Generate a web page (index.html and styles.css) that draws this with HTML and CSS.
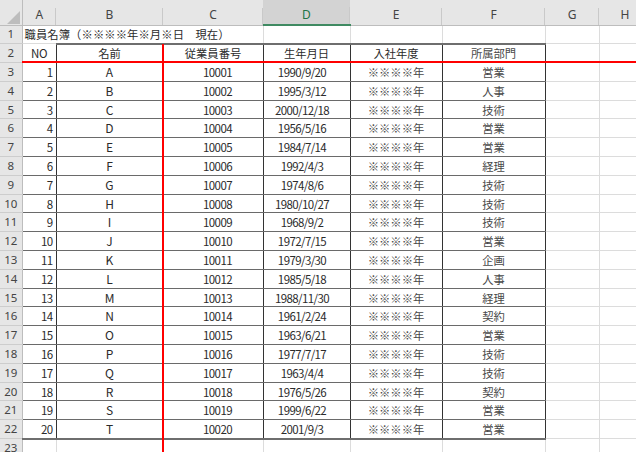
FILE: index.html
```html
<!DOCTYPE html>
<html lang="ja">
<head>
<meta charset="utf-8">
<title>職員名簿</title>
<link rel="stylesheet" href="styles.css">
</head>
<body>
<div class="sheet">
<table class="grid">
<colgroup><col class="w-rh"><col class="w-a"><col class="w-b"><col class="w-c"><col class="w-d"><col class="w-e"><col class="w-f"><col class="w-g"><col class="w-h"></colgroup>
<thead>
<tr class="colhead"><th class="corner"><svg class="tri" width="13" height="13" viewBox="0 0 13 13"><polygon points="13,0 13,13 0,13" fill="#bdbdbd"/></svg></th><th>A</th><th>B</th><th>C</th><th class="sel">D</th><th>E</th><th>F</th><th>G</th><th>H</th></tr>
</thead>
<tbody>
<tr class="r1"><th class="rh">1</th><td class="title" colspan="3">職員名簿（※※※※年※月※日　現在）</td><td></td><td></td><td></td><td></td><td></td></tr>
<tr class="hdr"><th class="rh">2</th><td class="lat">NO</td><td>名前</td><td>従業員番号</td><td>生年月日</td><td>入社年度</td><td>所属部門</td><td></td><td></td></tr>
<tr class="rec"><th class="rh">3</th><td>1</td><td>A</td><td>10001</td><td>1990/9/20</td><td>※※※※年</td><td>営業</td><td></td><td></td></tr>
<tr class="rec"><th class="rh">4</th><td>2</td><td>B</td><td>10002</td><td>1995/3/12</td><td>※※※※年</td><td>人事</td><td></td><td></td></tr>
<tr class="rec"><th class="rh">5</th><td>3</td><td>C</td><td>10003</td><td>2000/12/18</td><td>※※※※年</td><td>技術</td><td></td><td></td></tr>
<tr class="rec"><th class="rh">6</th><td>4</td><td>D</td><td>10004</td><td>1956/5/16</td><td>※※※※年</td><td>営業</td><td></td><td></td></tr>
<tr class="rec"><th class="rh">7</th><td>5</td><td>E</td><td>10005</td><td>1984/7/14</td><td>※※※※年</td><td>営業</td><td></td><td></td></tr>
<tr class="rec"><th class="rh">8</th><td>6</td><td>F</td><td>10006</td><td>1992/4/3</td><td>※※※※年</td><td>経理</td><td></td><td></td></tr>
<tr class="rec"><th class="rh">9</th><td>7</td><td>G</td><td>10007</td><td>1974/8/6</td><td>※※※※年</td><td>技術</td><td></td><td></td></tr>
<tr class="rec"><th class="rh">10</th><td>8</td><td>H</td><td>10008</td><td>1980/10/27</td><td>※※※※年</td><td>技術</td><td></td><td></td></tr>
<tr class="rec"><th class="rh">11</th><td>9</td><td>I</td><td>10009</td><td>1968/9/2</td><td>※※※※年</td><td>技術</td><td></td><td></td></tr>
<tr class="rec"><th class="rh">12</th><td>10</td><td>J</td><td>10010</td><td>1972/7/15</td><td>※※※※年</td><td>営業</td><td></td><td></td></tr>
<tr class="rec"><th class="rh">13</th><td>11</td><td>K</td><td>10011</td><td>1979/3/30</td><td>※※※※年</td><td>企画</td><td></td><td></td></tr>
<tr class="rec"><th class="rh">14</th><td>12</td><td>L</td><td>10012</td><td>1985/5/18</td><td>※※※※年</td><td>人事</td><td></td><td></td></tr>
<tr class="rec"><th class="rh">15</th><td>13</td><td>M</td><td>10013</td><td>1988/11/30</td><td>※※※※年</td><td>経理</td><td></td><td></td></tr>
<tr class="rec"><th class="rh">16</th><td>14</td><td>N</td><td>10014</td><td>1961/2/24</td><td>※※※※年</td><td>契約</td><td></td><td></td></tr>
<tr class="rec"><th class="rh">17</th><td>15</td><td>O</td><td>10015</td><td>1963/6/21</td><td>※※※※年</td><td>営業</td><td></td><td></td></tr>
<tr class="rec"><th class="rh">18</th><td>16</td><td>P</td><td>10016</td><td>1977/7/17</td><td>※※※※年</td><td>技術</td><td></td><td></td></tr>
<tr class="rec"><th class="rh">19</th><td>17</td><td>Q</td><td>10017</td><td>1963/4/4</td><td>※※※※年</td><td>技術</td><td></td><td></td></tr>
<tr class="rec"><th class="rh">20</th><td>18</td><td>R</td><td>10018</td><td>1976/5/26</td><td>※※※※年</td><td>契約</td><td></td><td></td></tr>
<tr class="rec"><th class="rh">21</th><td>19</td><td>S</td><td>10019</td><td>1999/6/22</td><td>※※※※年</td><td>営業</td><td></td><td></td></tr>
<tr class="rec last"><th class="rh">22</th><td>20</td><td>T</td><td>10020</td><td>2001/9/3</td><td>※※※※年</td><td>営業</td><td></td><td></td></tr>
<tr class="blank"><th class="rh">23</th><td></td><td></td><td></td><td></td><td></td><td></td><td></td><td></td></tr>
</tbody>
</table>
<div class="red-v"></div>
<div class="red-h"></div>
</div>
</body>
</html>
```
FILE: styles.css
```css
html, body {
  margin: 0;
  padding: 0;
  background: #fff;
}
body {
  overflow: hidden;
  font-family: "Noto Sans CJK JP", "Noto Sans", sans-serif;
  color: #2b2b2b;
}
.sheet {
  position: relative;
  width: 636px;
  height: 452px;
  overflow: hidden;
}
.grid {
  border-collapse: collapse;
  table-layout: fixed;
  width: 651px;
}
.w-rh { width: 22px; }
.w-a { width: 34px; }
.w-b { width: 107px; }
.w-c { width: 100px; }
.w-d { width: 87px; }
.w-e { width: 92px; }
.w-f { width: 103px; }
.w-g { width: 54px; }
.w-h { width: 52px; }

.grid th, .grid td {
  padding: 0;
  height: 18.8px;
  box-sizing: border-box;
  white-space: nowrap;
  overflow: hidden;
  font-size: 11.3px;
  font-weight: normal;
  line-height: 16px;
  text-align: center;
  vertical-align: middle;
  border-right: 1px solid #dcdcdc;
  border-bottom: 1px solid #dcdcdc;
}

/* column header */
.colhead th {
  height: 25px;
  background-color: #e6e6e6;
  background-image: linear-gradient(#c9c9c9, #c9c9c9);
  background-repeat: no-repeat;
  background-size: 1px 17px;
  background-position: right bottom;
  border-right: 0;
  border-bottom: 1px solid #bdbdbd;
  font-family: "Noto Sans", sans-serif;
  font-size: 12px;
  color: #444;
  padding-top: 5px;
}
.colhead th.sel {
  background-color: #d3d3d3;
  color: #217346;
  border-bottom: 2px solid #3f8a62;
}
.colhead th.corner {
  background-image: none;
  border-right: 1px solid #bdbdbd;
  vertical-align: bottom;
  padding: 0;
}
.tri {
  display: block;
  margin: 0 2px 1px auto;
}

/* row header */
.grid th.rh {
  background: #e6e6e6;
  border-right: 1px solid #bdbdbd;
  border-bottom: 1px solid #cdcdcd;
  font-family: "Noto Sans", sans-serif;
  font-size: 11.5px;
  color: #444;
}

/* title row */
.r1 td.title {
  text-align: left;
  padding-left: 2px;
  letter-spacing: 0.1px;
}

/* header row of table */
.hdr td:nth-child(n+2):nth-child(-n+7) {
  border-right: 1px solid #333;
  border-bottom: 1px solid #666;
}
.hdr td:nth-child(n+3):nth-child(-n+7) {
  border-top: 2px solid #6e6e6e;
}
.hdr td.lat {
  font-size: 11.5px;
  letter-spacing: -0.4px;
}

/* records */
.rec td:nth-child(n+2):nth-child(-n+7) {
  border-right: 1px solid #333;
  border-bottom: 1px solid #6a6a6a;
}
.rec td:nth-child(2) {
  text-align: right;
  padding-right: 3px;
}
.rec td:nth-child(2),
.rec td:nth-child(3),
.rec td:nth-child(4),
.rec td:nth-child(5) {
  font-size: 11.5px;
  letter-spacing: -0.6px;
}
.rec td:nth-child(3) {
  font-size: 12px;
  letter-spacing: 0;
}
.rec td:nth-child(4) {
  padding-left: 9px;
}
.rec td:nth-child(5) {
  padding-right: 9px;
}
.hdr td:nth-child(7),
.rec td:nth-child(7) {
  border-right: 2px solid #6e6e6e;
  color: #484848;
}
.rec td:nth-child(6) {
  color: #484848;
}
.rec.last td:nth-child(n+2):nth-child(-n+7) {
  border-bottom: 2px solid #6e6e6e;
}

/* overlay red lines */
.red-v {
  position: absolute;
  left: 162px;
  top: 44px;
  width: 2px;
  height: 408px;
  background: #ff0000;
}
.red-h {
  position: absolute;
  left: 22px;
  top: 61px;
  width: 614px;
  height: 2px;
  background: #ff0000;
}
```
